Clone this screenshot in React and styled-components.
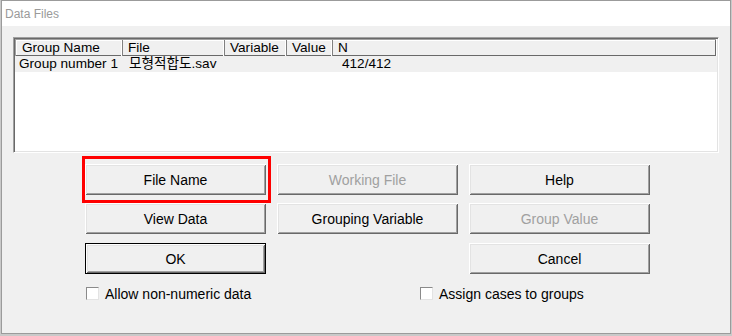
import React from 'react'
import styled, { createGlobalStyle } from 'styled-components'

const GlobalStyle = createGlobalStyle`
    body {
        margin: 0;
        background: #c9c9c9;
        font-family: "Liberation Sans", "Noto Sans CJK KR", sans-serif;
    }
`

const columns = [
    { title: 'Group Name', width: 108 },
    { title: 'File', width: 103 },
    { title: 'Variable', width: 63 },
    { title: 'Value', width: 47 },
    { title: 'N', width: null },
]

const rows = [
    ['Group number 1', '모형적합도.sav', '', '', '412/412'],
]

const App = () => {

    return <>
        <GlobalStyle />
        <Window>
            <TitleBar>Data Files</TitleBar>
            <Client>
                <ListView>
                    <Header>
                        {columns.map((col, index) => (
                            <HeaderCell key={index} $width={col.width}>{col.title}</HeaderCell>
                        ))}
                    </Header>
                    {rows.map((row, r) => (
                        <Row key={r}>
                            {row.map((value, index) => (
                                <Cell key={index} $width={columns[index].width} $first={index === 0}>
                                    {value}
                                </Cell>
                            ))}
                        </Row>
                    ))}
                </ListView>

                <Buttons>
                    <Highlighted>
                        <Button>File Name</Button>
                        <RedBox />
                    </Highlighted>
                    <Button disabled>Working File</Button>
                    <Button>Help</Button>

                    <Button>View Data</Button>
                    <Button>Grouping Variable</Button>
                    <Button disabled>Group Value</Button>

                    <Button $default $shift>OK</Button>
                    <span />
                    <Button $shift>Cancel</Button>
                </Buttons>

                <Options>
                    <Check>
                        <Box />
                        Allow non-numeric data
                    </Check>
                    <Check>
                        <Box />
                        Assign cases to groups
                    </Check>
                </Options>
            </Client>
        </Window>
    </>
}

export default App

const Window = styled.div`
    box-sizing: border-box;
    width: 730px;
    height: 334px;
    margin-left: 1px;
    border: 1px solid #9b9b9b;
    background: #f0f0f0;
    display: flex;
    flex-direction: column;
`

const TitleBar = styled.div`
    height: 25px;
    background: #fff;
    padding-left: 3px;
    display: flex;
    align-items: center;
    font-size: 12px;
    color: #9a9a9a;
`

const Client = styled.div`
    padding: 11px 11px 0 11px;
`

const ListView = styled.div`
    box-sizing: border-box;
    height: 116px;
    border: 1px solid;
    border-color: #a0a0a0 #fff #fff #a0a0a0;
    box-shadow: inset 1px 1px #696969, inset -1px -1px #e3e3e3;
    background: #fff;
    padding: 1px;
`

const Header = styled.div`
    display: flex;
    height: 16px;
    background: #f0f0f0;
    box-shadow: inset -1px -1px #696969, inset 1px 1px #fff;
    border-top: 1px solid #a0a0a0;
    border-left: 1px solid #a0a0a0;
    margin-right: 1px;
`

const HeaderCell = styled.div`
    box-sizing: border-box;
    ${p => p.$width ? `width: ${p.$width}px;` : 'flex: 1;'}
    padding-left: 6px;
    font-size: 13.6px;
    line-height: 15px;
    color: #000;
    white-space: nowrap;
    border-right: ${p => p.$width ? '1px solid #808080' : 'none'};
    box-shadow: ${p => p.$width ? 'inset -1px 0 #fff' : 'none'};
    margin-right: ${p => p.$width ? '-1px' : '0'};

    &:first-child {
        width: ${p => p.$width - 1}px;
    }
`

const Row = styled.div`
    display: flex;
    height: 16px;
    background: #f0f0f0;
`

const Cell = styled.div`
    box-sizing: border-box;
    ${p => p.$width ? `width: ${p.$width}px;` : 'flex: 1;'}
    padding-left: ${p => p.$first ? '4px' : '6px'};
    font-size: 13.6px;
    line-height: 16px;
    color: #000;
    white-space: nowrap;
`

const Buttons = styled.div`
    display: grid;
    grid-template-columns: repeat(3, 181px);
    grid-template-rows: repeat(3, 31px);
    column-gap: 11px;
    row-gap: 8px;
    margin: 11px 0 0 72px;
`

const Highlighted = styled.div`
    position: relative;
    display: flex;
`

const RedBox = styled.div`
    position: absolute;
    left: -3px;
    top: -8px;
    width: 189px;
    height: 47px;
    box-sizing: border-box;
    border: 3px solid #ff0000;
    pointer-events: none;
`

const Button = styled.button`
    flex: 1;
    box-sizing: border-box;
    height: 31px;
    padding: 0;
    margin-top: ${p => p.$shift ? '1px' : '0'};
    font-family: "Liberation Sans", "Noto Sans CJK KR", sans-serif;
    font-size: 14px;
    color: #000;
    background: #f0f0f0;
    border: ${p => p.$default ? '1px solid #000' : 'none'};
    box-shadow: inset 1px 1px #fff, inset -1px -1px #696969,
        inset 2px 2px #e3e3e3, inset -2px -2px #a0a0a0;

    &:disabled {
        color: #a0a0a0;
    }
`

const Options = styled.div`
    display: grid;
    grid-template-columns: 334px auto;
    margin: 14px 0 0 73px;
`

const Check = styled.label`
    display: flex;
    align-items: center;
    gap: 6px;
    font-size: 14px;
    color: #000;
    height: 13px;
`

const Box = styled.span`
    box-sizing: border-box;
    width: 13px;
    height: 13px;
    background: #fff;
    border: 1px solid;
    border-color: #8a8a8a #e3e3e3 #e3e3e3 #8a8a8a;
`
